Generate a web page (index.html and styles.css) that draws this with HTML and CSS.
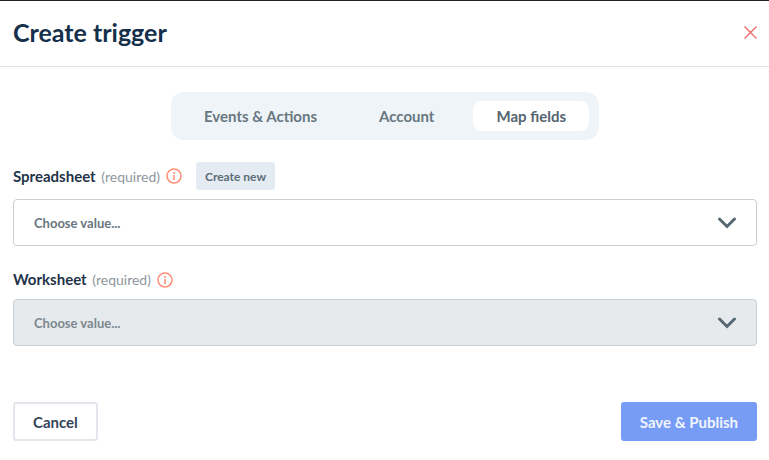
FILE: index.html
```html
<!DOCTYPE html>
<html lang="en">
<head>
<meta charset="UTF-8">
<meta name="viewport" content="width=device-width, initial-scale=1.0">
<title>Create trigger</title>
<link rel="stylesheet" href="styles.css">
</head>
<body>

<header class="header">
  <h1 class="title">Create trigger</h1>
  <button class="close" type="button" aria-label="Close">
    <svg width="14" height="14" viewBox="0 0 14 14"><path d="M1.5 1.5l12 12M13.5 1.5L1.5 13.5"/></svg>
  </button>
</header>

<form class="content">
  <nav class="tabs">
    <button class="tab" type="button">Events &amp; Actions</button>
    <button class="tab" type="button">Account</button>
    <button class="tab active" type="button">Map fields</button>
  </nav>

  <div class="field">
    <div class="field-head">
      <label for="spreadsheet">Spreadsheet <span class="required">(required)</span></label>
      <svg class="info" width="16" height="16" viewBox="0 0 16 16"><circle cx="8" cy="8" r="7"/><path d="M8 7v5M8 4v2"/></svg>
      <button class="create" type="button">Create new</button>
    </div>
    <div class="select">
      <select id="spreadsheet">
        <option>Choose value...</option>
      </select>
      <svg class="arrow" width="20" height="12" viewBox="0 0 20 12"><path d="M2.5 2L10 9.5 17.5 2"/></svg>
    </div>
  </div>

  <div class="field">
    <div class="field-head">
      <label for="worksheet">Worksheet <span class="required">(required)</span></label>
      <svg class="info" width="16" height="16" viewBox="0 0 16 16"><circle cx="8" cy="8" r="7"/><path d="M8 7v5M8 4v2"/></svg>
    </div>
    <div class="select">
      <select id="worksheet" disabled>
        <option>Choose value...</option>
      </select>
      <svg class="arrow" width="20" height="12" viewBox="0 0 20 12"><path d="M2.5 2L10 9.5 17.5 2"/></svg>
    </div>
  </div>

  <footer class="footer">
    <button class="btn cancel" type="button">Cancel</button>
    <button class="btn save" type="submit">Save &amp; Publish</button>
  </footer>
</form>

</body>
</html>
```
FILE: styles.css
```css
* {
  box-sizing: border-box;
}
body {
  margin: 0;
  background: #fff;
  border-top: 1px solid #231f20;
  font-family: Lato, "Liberation Sans", sans-serif;
  color: #1f3449;
}
button, select {
  font-family: inherit;
  font-weight: 700;
  cursor: pointer;
}
svg {
  display: block;
  fill: none;
}
.header {
  display: flex;
  align-items: center;
  justify-content: space-between;
  padding: 15px 12px 18px 13px;
  border-bottom: 1px solid #dfe1e3;
}
.title {
  margin: 0;
  font-size: 25px;
  line-height: 32px;
  font-weight: 700;
  color: #15304b;
}
.close {
  padding: 0;
  border: 0;
  background: none;
}
.close svg {
  stroke: #ec6666;
  stroke-width: 1.3;
}
.content {
  padding: 25px 12px 16px 13px;
}
.tabs {
  display: flex;
  gap: 16px;
  width: fit-content;
  margin: 0 auto 22px;
  padding: 9px 10px;
  border-radius: 13px;
  background: #eff4f9;
}
.tab {
  height: 30px;
  padding: 0 23px;
  border: 0;
  border-radius: 8px;
  background: none;
  color: #68777f;
  font-size: 15px;
}
.tab.active {
  background: #fff;
  color: #54656f;
}
.field {
  margin-bottom: 23px;
}
.field-head {
  display: flex;
  align-items: center;
  margin-bottom: 9px;
}
.field-head label {
  font-size: 15px;
  line-height: 20px;
  font-weight: 700;
}
.required {
  margin-left: 2px;
  color: #8d979e;
  font-size: 14px;
  font-weight: 400;
}
.info {
  margin-left: 6px;
  stroke: #ff8c73;
  stroke-width: 1.5;
}
.create {
  height: 28px;
  margin-left: 14px;
  padding: 0 9px;
  border: 0;
  border-radius: 3px;
  background: #e4ebf2;
  color: #5c6b76;
  font-size: 12px;
}
.select {
  position: relative;
}
.select select {
  display: block;
  width: 100%;
  height: 47px;
  padding: 0 48px 0 20px;
  border: 1px solid #c9d0d5;
  border-radius: 4px;
  background: #fff;
  color: #67767f;
  font-size: 13px;
  appearance: none;
}
.select select:disabled {
  background: #e6eaed;
  color: #7c878e;
  opacity: 1;
}
.arrow {
  position: absolute;
  top: 18px;
  right: 20px;
  stroke: #566872;
  stroke-width: 3;
  stroke-linecap: round;
  pointer-events: none;
}
.footer {
  display: flex;
  justify-content: space-between;
  margin-top: 56px;
}
.btn {
  height: 39px;
  padding: 0 18px;
  border: 0;
  border-radius: 3px;
  font-size: 15px;
}
.cancel {
  border: 2px solid #e3e7ed;
  background: #fff;
  color: #34465c;
}
.save {
  padding: 0 19px;
  background: #779cf5;
  color: #f0f5ff;
}
```
